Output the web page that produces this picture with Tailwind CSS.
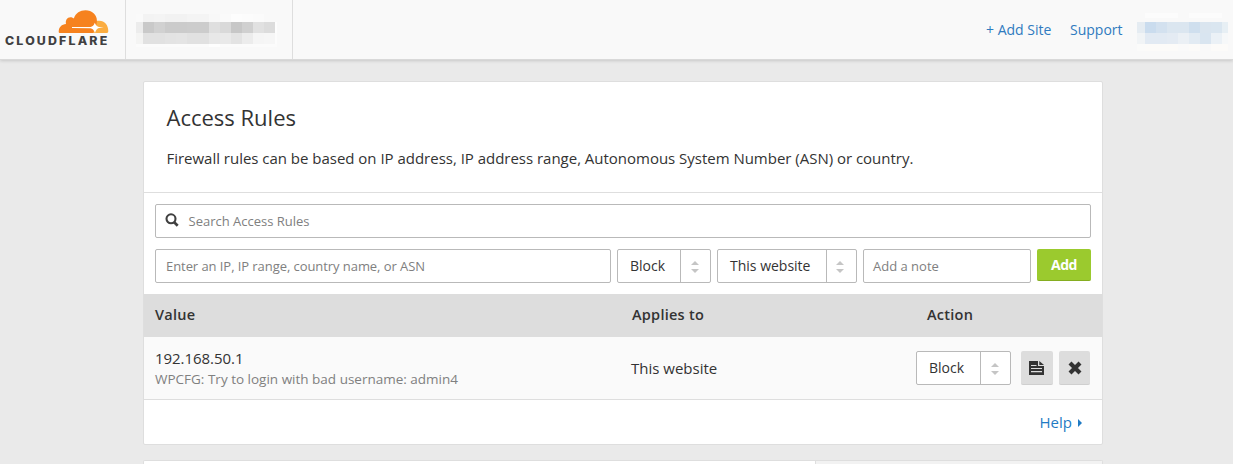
<!DOCTYPE html>
<html lang="en">
<head>
<meta charset="utf-8">
<title>Access Rules</title>
<script src="https://cdn.jsdelivr.net/npm/@tailwindcss/browser@4"></script>
</head>
<body class="h-[464px] overflow-hidden bg-[#eaeaea] font-['Open_Sans',sans-serif] text-[15px] text-[#333]">
<header class="flex h-[60px] border-b border-[#d9d9d9] bg-[#f9f9f9] shadow-[0_1px_3px_rgba(0,0,0,0.15)]">
  <div class="flex w-[126px] flex-col border-r border-[#dedede] pl-[5px] pt-[9px]">
    <svg class="ml-[53px] h-[25px] w-[51px] shrink-0" viewBox="58 9 51 25">
      <path fill="#fbad41" d="M98 20.800c6-.8 10.500 4 10.300 10.500q0 1.700-1.300 1.700H91V21z"/>
      <path fill="#f6821f" d="M59.500 33q-1-.2-.8-1.600c.3-4.400 3-6.900 7.300-7.300-.8-3.600 1-6.900 4.500-6.900 1.500 0 2.500.6 3.300 1.300C75.800 13 80 10.300 85.500 10.300c6.500 0 11.400 4.400 11.400 10.200 0 4-1.600 9-4 12.500z"/>
      <path fill="#fff" d="M72 27h18.500q3-.3 4.300-4.200 1.500 3.900 4.200 4.200l4.700.5-4.700.6q-2.700.4-4 5-1.700-4.600-4.500-4.900L72 28z"/>
    </svg>
    <div class="h-[14px] w-[98px] origin-left scale-x-[1.075] font-['Inter',sans-serif] text-[11.500px] font-extrabold leading-[14px] tracking-[2.010px] text-[#404041]">CLOUDFLARE</div>
  </div>
  <div class="w-[167px] border-r border-[#dedede] pl-[10px] pt-[14px]">
    <div class="grid w-[141px] grid-cols-[7px_repeat(12,11px)_2px] grid-rows-[8px_11px_11px_3px] *:block">
      <i class="bg-[#fafafa]"></i><i class="bg-[#f3f3f3]"></i><i class="bg-[#f4f4f4]"></i><i class="bg-[#f2f2f2]"></i><i class="bg-[#f2f2f2]"></i><i class="bg-[#f4f4f4]"></i><i class="bg-[#f4f4f4]"></i><i class="bg-[#f8f8f8]"></i><i class="bg-[#fafafa]"></i><i class="bg-[#fdfdfd]"></i><i class="bg-[#fcfcfc]"></i><i class="bg-[#fbfbfb]"></i><i class="bg-[#f9f9f9]"></i><i class="bg-[#f9f9f9]"></i>
      <i class="bg-[#ececec]"></i><i class="bg-[#c9c9c9]"></i><i class="bg-[#d1d1d1]"></i><i class="bg-[#cbcbcb]"></i><i class="bg-[#cbcbcb]"></i><i class="bg-[#cccccc]"></i><i class="bg-[#cccccc]"></i><i class="bg-[#dfdfdf]"></i><i class="bg-[#d9d9d9]"></i><i class="bg-[#c7c7c7]"></i><i class="bg-[#d0d0d0]"></i><i class="bg-[#e1e1e1]"></i><i class="bg-[#dcdcdc]"></i><i class="bg-[#fdfdfd]"></i>
      <i class="bg-[#f4f4f3]"></i><i class="bg-[#e1e1e1]"></i><i class="bg-[#e1e1e1]"></i><i class="bg-[#e3e3e3]"></i><i class="bg-[#e4e4e4]"></i><i class="bg-[#e1e1e1]"></i><i class="bg-[#e1e1e1]"></i><i class="bg-[#e8e8e8]"></i><i class="bg-[#e9e9e9]"></i><i class="bg-[#e3e3e3]"></i><i class="bg-[#ececec]"></i><i class="bg-[#f5f5f5]"></i><i class="bg-[#f6f6f6]"></i><i class="bg-[#fcfcfc]"></i>
      <i class="col-span-7 bg-[#fbfbfb]"></i><i class="bg-[#fefefe]"></i><i class="col-span-6 bg-[#fbfbfb]"></i>
    </div>
  </div>
  <nav class="ml-auto flex h-[59px] text-[14px] leading-[20px] text-[#2f7bbf]">
    <a class="mr-[18px] mt-[20px] w-[66px] whitespace-nowrap">+ Add Site</a>
    <a class="mt-[20px] w-[67px] whitespace-nowrap">Support</a>
    <div class="mt-[13px] mr-[5px] grid h-[38px] w-[91px] grid-cols-[8px_repeat(7,11px)_6px] grid-rows-[5px_4px_11px_11px_7px] *:block">
      <i></i><i class="col-span-3 bg-[#fcfcfc]"></i><i></i><i class="col-span-3 bg-[#fcfcfc]"></i><i></i>
      <i class="col-span-9"></i>
      <i class="bg-[#e5ecf2]"></i><i class="bg-[#cadcee]"></i><i class="bg-[#d3e1ef]"></i><i class="bg-[#dbe6f0]"></i><i class="bg-[#dbe6f0]"></i><i class="bg-[#cfdfee]"></i><i class="bg-[#dae5ef]"></i><i class="bg-[#dae6f0]"></i><i class="bg-[#e7eff4]"></i>
      <i class="bg-[#f1f4f6]"></i><i class="bg-[#e2eaf3]"></i><i class="bg-[#e2eaf3]"></i><i class="bg-[#e4ebf3]"></i><i class="bg-[#ebf0f5]"></i><i class="bg-[#e2ebf3]"></i><i class="bg-[#d9e5f0]"></i><i class="bg-[#ebf1f6]"></i><i class="bg-[#f6f8f9]"></i>
      <i class="bg-[#fbfbfa]"></i><i class="col-span-3 bg-[#fcfbf9]"></i><i class="bg-[#fafafa]"></i><i class="bg-[#fcfbf9]"></i><i></i><i class="col-span-2 bg-[#fcfbf9]"></i>
    </div>
  </nav>
</header>

<main class="ml-[143px] mt-[21px] w-[960px]">
  <section class="h-[364px] rounded-[2px] border border-[#dedede] bg-white">
    <div class="h-[111px] border-b border-[#dedede] pl-[22.500px] pt-[19px]">
      <h1 class="text-[22px] leading-[32px]">Access Rules</h1>
      <p class="mt-[14px] whitespace-nowrap leading-[22px] tracking-[-0.018px]">Firewall rules can be based on IP address, IP address range, Autonomous System Number (ASN) or country.</p>
    </div>
    <div class="h-[101px] px-[11px] pt-[11px] text-[13px] text-[#808080]">
      <div class="flex h-[34px] items-center rounded-[2px] border border-[#b9b9b9] pl-[9px]">
        <svg class="mr-[9.500px] mb-[2px] h-[14px] w-[14px]" viewBox="0 0 14 14" fill="none" stroke="#404040"><circle cx="6" cy="5.800" r="4.500" stroke-width="2.100"/><path d="M9.200 9.200l3.500 3.500" stroke-width="2.700"/></svg>
        <span class="pt-[2px]">Search Access Rules</span>
      </div>
      <div class="mt-[11px] flex gap-[6px] *:shrink-0">
        <div class="flex h-[34px] w-[456px] items-center rounded-[2px] border border-[#b9b9b9] pl-[10px] pt-[2px] tracking-[-0.065px]">Enter an IP, IP range, country name, or ASN</div>
        <div class="flex h-[34px] w-[94px] items-center rounded-[2px] border border-[#b9b9b9] text-[14px] text-[#333]">
          <span class="flex h-full w-[63px] items-center border-r border-[#b9b9b9] pb-[2px] pl-[12px]">Block</span>
          <svg class="ml-[10px] mt-[2px] h-[12px] w-[8px]" viewBox="0 0 8 12" fill="#c5c5c5"><path d="M0 4l4-4 4 4zM0 8h8l-4 4z"/></svg>
        </div>
        <div class="flex h-[34px] w-[140px] items-center rounded-[2px] border border-[#b9b9b9] text-[14px] text-[#333]">
          <span class="flex h-full w-[109px] items-center border-r border-[#b9b9b9] pb-[2px] pl-[12px]">This website</span>
          <svg class="ml-[9px] mt-[2px] h-[12px] w-[8px]" viewBox="0 0 8 12" fill="#c5c5c5"><path d="M0 4l4-4 4 4zM0 8h8l-4 4z"/></svg>
        </div>
        <div class="flex h-[34px] w-[168px] items-center rounded-[2px] border border-[#b9b9b9] pl-[9px] pt-[2px]">Add a note</div>
        <div class="flex h-[32px] w-[54px] items-center justify-center rounded-[2px] border-b border-[#85ad20] bg-[#9bca2e] text-[14px] font-bold tracking-[-0.400px] text-white">Add</div>
      </div>
    </div>
    <div class="flex h-[43px] items-center bg-[#ddd] pb-[2px] pl-[11px] text-[14.500px] font-semibold tracking-[0.250px]">
      <span class="w-[477px]">Value</span><span class="w-[295px]">Applies to</span><span>Action</span>
    </div>
    <div class="flex h-[63px] border-b border-[#dedede] bg-[#fafafa] pl-[11px]">
      <div class="w-[476px] pt-[11px]">
        <div class="text-[15px] leading-[20px] tracking-[-0.050px]">192.168.50.1</div>
        <div class="mt-[1px] text-[13.500px] leading-[20px] text-[#808080]">WPCFG: Try to login with bad username: admin4</div>
      </div>
      <div class="w-[285px] pt-[21px] text-[15px] leading-[20px]">This website</div>
      <div class="mt-[14px] flex h-[34px] w-[95px] items-center rounded-[2px] border border-[#b9b9b9] bg-white text-[14px]">
        <span class="flex h-full w-[64px] items-center border-r border-[#b9b9b9] pb-[2px] pl-[12px]">Block</span>
        <svg class="ml-[10px] mt-[2px] h-[12px] w-[8px]" viewBox="0 0 8 12" fill="#c5c5c5"><path d="M0 4l4-4 4 4zM0 8h8l-4 4z"/></svg>
      </div>
      <div class="ml-[10px] mt-[14px] flex h-[34px] w-[32px] items-center justify-center rounded-[2px] border-b border-[#cfcfcf] bg-[#ddd] pr-[1px]">
        <svg class="h-[14px] w-[15px]" viewBox="0 0 15 14"><path fill="#333" d="M0 0h9v5h6v9H0zM10.300 0L15 4h-4.700z"/><path stroke="#ddd" stroke-width="1.200" d="M2 4.500h5.500M2 7.500h11M2 10.700h11"/></svg>
      </div>
      <div class="ml-[6px] mt-[14px] flex h-[34px] w-[31px] items-center justify-center rounded-[2px] border-b border-[#cfcfcf] bg-[#ddd]">
        <svg class="h-[14px] w-[14px]" viewBox="0 0 14 14"><path stroke="#333" stroke-width="4.200" d="M2 2l10 10M12 2L2 12"/></svg>
      </div>
    </div>
    <div class="flex h-[44px] items-center justify-end pr-[20px] text-[#1f7bc4]">
      <span>Help</span>
      <svg class="ml-[6px] mt-[2px] h-[8px] w-[4px]" viewBox="0 0 4 8" fill="#1f7bc4"><path d="M0 0l4 4-4 4z"/></svg>
    </div>
  </section>
  <section class="mt-[15px] flex h-[4px] rounded-t-[2px] border border-b-0 border-[#dedede] bg-white">
    <div class="w-[672px] border-r border-[#dedede]"></div>
    <div class="flex-1 bg-[#f2f2f2]"></div>
  </section>
</main>
</body>
</html>
